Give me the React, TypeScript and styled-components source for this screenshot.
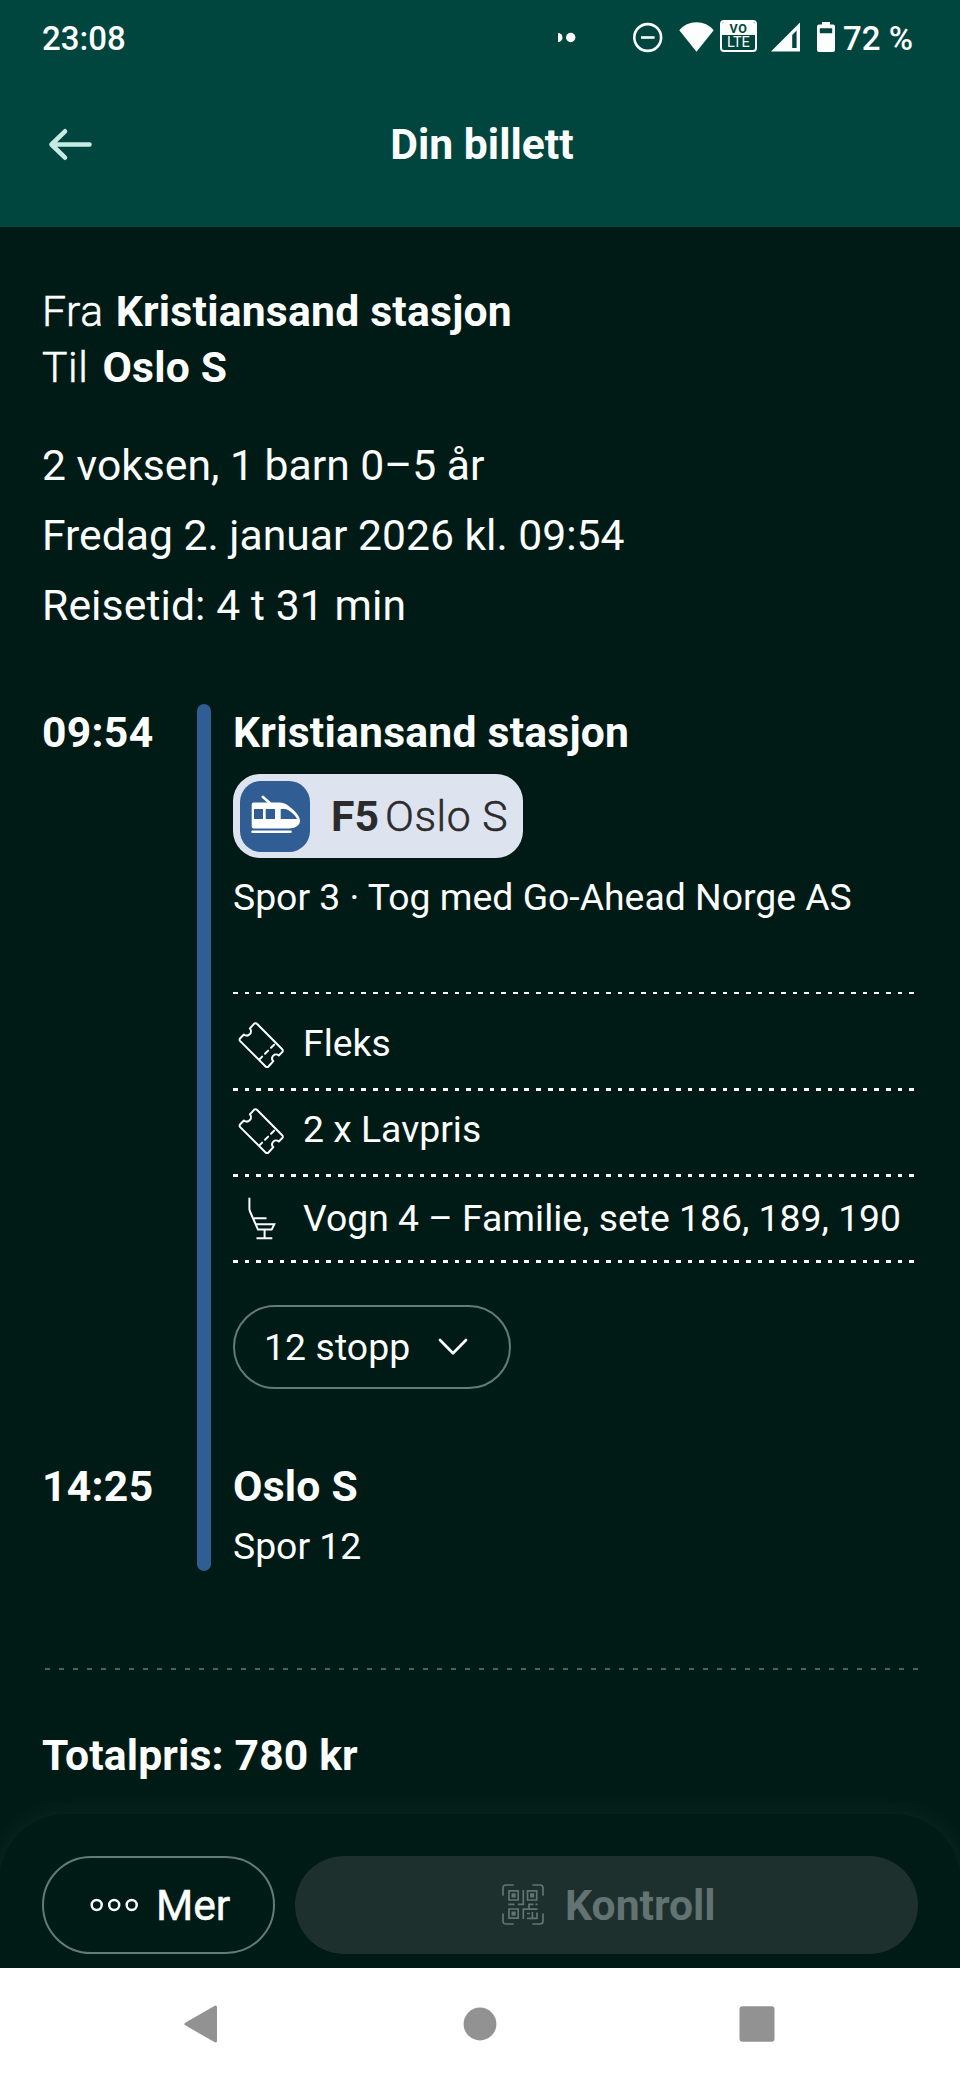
import React from 'react';
import styled, { createGlobalStyle, css } from 'styled-components';

const color = {
  header: '#00463e',
  page: '#001a16',
  text: '#fcfefe',
  arrow: '#c6ebe3',
  line: '#2f5d94',
  badge: '#dde4ef',
  badgeText: '#2b2b2c',
  outline: '#647a76',
  disabled: '#1d302e',
  disabledText: '#637371',
  nav: '#929292',
};

const GlobalStyle = createGlobalStyle`
  * { box-sizing: border-box; }
  body {
    margin: 0;
    background: ${color.page};
    font-family: Roboto, "Liberation Sans", sans-serif;
    color: ${color.text};
  }
  svg { display: block; flex: none; }
  button { font: inherit; color: inherit; padding: 0; margin: 0; background: none; border: 0; }
  h1, h2, p, ul { margin: 0; padding: 0; list-style: none; }
`;

const Screen = styled.div`
  width: 960px;
  height: 2080px;
  display: flex;
  flex-direction: column;
  background: ${color.page};
  overflow: hidden;
`;

/* Header */

const Header = styled.header`
  height: 227px;
  flex: none;
  background: ${color.header};
`;

const StatusBar = styled.div`
  height: 77px;
  padding: 0 47px 0 42px;
  display: flex;
  align-items: center;
  font-size: 33px;
  font-weight: 500;
  line-height: 40px;
`;

const StatusIcons = styled.div`
  margin-left: auto;
  display: flex;
  align-items: center;
  svg { margin-top: -4px; }
`;

const StatusItem = styled.span<{ $before: number }>`
  margin-left: ${(p) => p.$before}px;
`;

const VolteBadge = styled.div`
  width: 37px;
  height: 32px;
  margin-top: -5px;
  border: 2px solid ${color.text};
  border-radius: 4px;
  display: grid;
  grid-template-rows: 13px 15px;
  overflow: hidden;
  text-align: center;
`;

const VolteTop = styled.span`
  background: ${color.text};
  color: ${color.header};
  font-size: 12.5px;
  font-weight: 700;
  letter-spacing: 0.6px;
  line-height: 13px;
`;

const VolteBottom = styled.span`
  font-size: 14.5px;
  font-weight: 400;
  line-height: 16px;
`;

const TitleBar = styled.div`
  height: 133px;
  padding: 0 40px 0 42px;
  display: grid;
  grid-template-columns: 60px 1fr 58px;
  align-items: center;
`;

const BackButton = styled.button`
  padding-left: 5px;
`;

const Title = styled.h1`
  font-size: 42.67px;
  font-weight: 700;
  line-height: 56px;
  text-align: center;
`;

/* Summary */

const Main = styled.main`
  flex: 1;
  min-height: 0;
  padding: 56px 42px 0;
`;

const RouteLine = styled.p<{ $gap: number }>`
  display: flex;
  gap: ${(p) => p.$gap}px;
  font-size: 42.67px;
  line-height: 56px;
`;

const lightText = css`
  font-weight: 300;
  letter-spacing: 0.6px;
  -webkit-text-stroke: 0.55px currentColor;
`;

const RouteLabel = styled.span`
  ${lightText}
`;

const heading = css`
  font-size: 42.67px;
  font-weight: 700;
  line-height: 57px;
`;

const RouteStation = styled.span`
  font-weight: 700;
  letter-spacing: 0.22px;
`;

const Facts = styled.div`
  margin: 35px 0 64px;
  font-size: 42.67px;
  line-height: 70px;
`;

const Duration = styled.p`
  letter-spacing: 0.1px;
`;

/* Timeline */

const Journey = styled.section`
  display: grid;
  grid-template-columns: 155px 14px 1fr;
`;

const Time = styled.time`
  ${heading}
  letter-spacing: 0.3px;
`;

const TimelineBar = styled.div`
  grid-column: 2;
  grid-row: 1 / 3;
  border-radius: 7px;
  background: ${color.line};
`;

const Stop = styled.div<{ $last?: boolean }>`
  grid-column: 3;
  padding: 0 0 ${(p) => (p.$last ? 0 : 69)}px 22px;
`;

const StationName = styled.h2`
  ${heading}
  letter-spacing: 0.22px;
`;

const Detail = styled.p<{ $gap: number }>`
  margin-top: ${(p) => p.$gap}px;
  font-size: 37.33px;
  line-height: 50px;
  white-space: nowrap;
`;

const LineBadge = styled.div`
  width: 290px;
  height: 84px;
  margin-top: 13px;
  padding-left: 7px;
  display: flex;
  align-items: center;
  border-radius: 27px;
  background: ${color.badge};
  color: ${color.badgeText};
  font-size: 42.67px;
  line-height: 56px;
`;

const ModeIcon = styled.div`
  width: 70px;
  height: 71px;
  margin-right: 21px;
  border-radius: 21px;
  background: ${color.line};
`;

const LineCode = styled.span`
  font-weight: 700;
  margin-right: 6px;
`;

const LineTarget = styled.span`
  ${lightText}
`;

const dashes = (tone: string, dash: number, period: number) =>
  `repeating-linear-gradient(90deg, ${tone} 0 ${dash}px, transparent ${dash}px ${period}px)`;

const TicketList = styled.ul`
  margin-top: 70px;
  &::before {
    content: '';
    display: block;
    height: 2px;
    background: ${dashes(color.text, 4.7, 11.66)};
  }
`;

const TicketRow = styled.li<{ $height: number; $top: number }>`
  height: ${(p) => p.$height}px;
  padding-top: ${(p) => p.$top}px;
  display: flex;
  gap: 14px;
  font-size: 37.33px;
  line-height: 50px;
  white-space: nowrap;
  background: ${dashes(color.text, 4.7, 11.66)} bottom / 100% 3px no-repeat;
`;

const pill = css`
  display: flex;
  align-items: center;
  border-radius: 50px;
`;

const StopsButton = styled.button`
  ${pill}
  width: 278px;
  height: 84px;
  margin-top: 42px;
  padding-left: 29px;
  gap: 28px;
  border: 2px solid ${color.outline};
  font-size: 37.33px;
  line-height: 50px;
  letter-spacing: 0.1px;
`;

const Divider = styled.div`
  height: 2px;
  margin: 97px 0 57px 3px;
  background: ${dashes('#4c605c', 5, 14)};
`;

const Total = styled.p`
  ${heading}
  letter-spacing: 0.15px;
`;

/* Footer */

const ActionBar = styled.footer`
  flex: none;
  height: 154px;
  padding: 42px 42px 0;
  display: flex;
  gap: 20px;
  border-radius: 66px 66px 0 0;
  background: ${color.page};
  box-shadow: 0 0 27px rgba(200, 255, 240, 0.07);
`;

const MoreButton = styled.button`
  ${pill}
  width: 233px;
  height: 98px;
  padding-left: 45px;
  gap: 17px;
  border: 2px solid ${color.outline};
  font-size: 42.67px;
  font-weight: 400;
  -webkit-text-stroke: 0.5px currentColor;
`;

const ControlButton = styled.button`
  ${pill}
  flex: 1;
  height: 98px;
  padding-left: 207px;
  gap: 21px;
  background: ${color.disabled};
  color: ${color.disabledText};
  font-size: 42.67px;
  font-weight: 700;
`;

const SystemNav = styled.nav`
  position: relative;
  flex: none;
  height: 112px;
  padding: 0 185px 0 183px;
  display: grid;
  grid-template-columns: 1fr 36px 1fr;
  align-items: center;
  background: #fff;
  svg:last-child { justify-self: end; }
`;

/* Icons */

const DotsIndicator = () => (
  <svg width="19" height="34" viewBox="0 0 19 34">
    <path d="M1 13a4.5 4.5 0 0 1 0 9z" fill={color.text} />
    <circle cx="13.7" cy="17.5" r="4.7" fill={color.text} />
  </svg>
);

const DoNotDisturb = () => (
  <svg width="30" height="34" viewBox="0 0 30 34" fill="none" stroke={color.text} strokeWidth="2.6">
    <circle cx="14.7" cy="17.5" r="13.4" />
    <path d="M8 17.5h13.6" />
  </svg>
);

const Wifi = () => (
  <svg width="35" height="34" viewBox="0 0 35 34" fill={color.text}>
    <path d="M17.5 31.7 0.3 10.3C4.6 5 10.6 2.3 17.5 2.3S30.4 5 34.7 10.3z" />
  </svg>
);

const Signal = () => (
  <svg width="29" height="34" viewBox="0 0 29 34">
    <path fillRule="evenodd" d="M29 2.500v29H0zM21.2 14.900v13.200h4.400V10.500z" fill={color.text} />
  </svg>
);

const Battery = () => (
  <svg width="18" height="34" viewBox="0 0 18 34">
    <path
      fillRule="evenodd"
      d="M5 2h8v2.6h3a2 2 0 0 1 2 2v23.4a2 2 0 0 1-2 2H2a2 2 0 0 1-2-2V6.6a2 2 0 0 1 2-2h3zM2.8 8.3v5h12.4v-5z"
      fill={color.text}
    />
  </svg>
);

const ArrowLeft = () => (
  <svg width="48" height="40" viewBox="0 0 48 40" fill="none" stroke={color.arrow} strokeWidth="4.6" strokeLinecap="round" strokeLinejoin="round">
    <path d="M42.5 20.5H5M18 7.3 4.5 20.5 18 33.7" />
  </svg>
);

const Train = () => (
  <svg width="70" height="71" viewBox="0 0 70 71">
    <path d="M22.7 15.8 29.5 21.8" stroke="#fff" strokeWidth="2.5" strokeLinecap="round" />
    <path
      fillRule="evenodd"
      fill="#fff"
      d="M13.7 21.5H39.5C43 21.5 46 22.8 49 25.2C53.5 28.8 60 34 60 39.8C60 44.5 55 47.5 49 47.5H13.7A2 2 0 0 1 11.7 45.5V23.5A2 2 0 0 1 13.7 21.5ZM14 28V38H23V28ZM25.7 28V38H35V28ZM40.7 28V38H57C56 35.5 53 32.5 48.5 29.3C47 28.3 45.5 28 44 28Z"
    />
    <path d="M12.5 50.8H50.5" stroke="#fff" strokeWidth="2.5" strokeLinecap="round" />
  </svg>
);

const Ticket = () => (
  <svg width="56" height="54" viewBox="-0.5 0 56 54" fill="none" stroke={color.text} strokeWidth="2" strokeLinecap="round" strokeLinejoin="round">
    <path d="M20.5 5.8a2 2 0 0 1 2.9 0L48.7 31.2a2 2 0 0 1 0 2.9L45.3 37.5c-1.5-1.4-4-1.5-5.5 0.1s-1.5 4 0 5.6L35 48.5a2 2 0 0 1-2.9 0L6.7 23.1a2 2 0 0 1 0-2.9L10.4 16.5c1.7 1.3 4.2 1.3 5.8-0.2s1.7-4.1 0.2-6z" />
    <path d="M40.7 26.6 26 41.3" strokeDasharray="4.5 4" />
  </svg>
);

const Seat = () => (
  <svg width="56" height="54" viewBox="0 0 56 54" fill="none" stroke={color.text} strokeWidth="2">
    <path d="M16.4 4.7V15.5Q16.4 17 17 18.5L25 36.6H38.7L41.3 31.3H22.8M21 25.2H33.5M31.6 36.6V45M23.5 45.3H39.3" />
  </svg>
);

const ChevronDown = () => (
  <svg width="30" height="20" viewBox="0 0 30 20" fill="none" stroke={color.text} strokeWidth="2.7" strokeLinecap="round" strokeLinejoin="round">
    <path d="M2 3 15 16.3 28 3" />
  </svg>
);

const MoreDots = () => (
  <svg width="50" height="14" viewBox="0 0 50 14" fill="none" stroke={color.text} strokeWidth="2.5">
    <circle cx="7.7" cy="7" r="5" />
    <circle cx="25.2" cy="7" r="5" />
    <circle cx="42.7" cy="7" r="5" />
  </svg>
);

const QrCode = () => (
  <svg width="42" height="42" viewBox="0 0 42 42" fill="none" stroke={color.disabledText} strokeWidth="1.7">
    <path d="M1 11V4Q1 1 4 1H11M31 1H38Q41 1 41 4V11M41 30V37Q41 40 38 40H31M11 40H4Q1 40 1 37V30" strokeLinecap="round" />
    <path d="M7 6.8H16.2V16H7ZM25.5 6.8H34.7V16H25.5ZM7 25H16.2V34.2H7Z" />
    <path d="M9.5 9.3h4.2v4.2H9.5zM28 9.3h4.2v4.2H28zM9.5 27.5h4.2v4.2H9.5z" fill={color.disabledText} stroke="none" />
    <path d="M21.3 6V20.3H15.7M6.3 20.3H12.5M21.3 35V25.2H35.5M27 25V20.3H31.5M33.5 20.3H35.5M30.4 28V34.3M25 34.3H35.5M35 28.5V35M25 29.5H28" />
  </svg>
);

const NavBack = () => (
  <svg width="36" height="40" viewBox="0 0 36 40">
    <path d="M3 20 32.5 3V37Z" fill={color.nav} stroke={color.nav} strokeWidth="3" strokeLinejoin="round" />
  </svg>
);

const NavHome = () => (
  <svg width="36" height="40" viewBox="0 0 36 40">
    <circle cx="19" cy="20" r="16.4" fill={color.nav} />
  </svg>
);

const NavRecent = () => (
  <svg width="36" height="40" viewBox="0 0 36 40">
    <rect x="0.5" y="2.2" width="35" height="35.5" rx="3" fill={color.nav} />
  </svg>
);

const tickets = [
  { icon: <Ticket />, label: 'Fleks', height: 97, top: 24 },
  { icon: <Ticket />, label: '2 x Lavpris', height: 86, top: 13 },
  { icon: <Seat />, label: 'Vogn 4 – Familie, sete 186, 189, 190', height: 86, top: 16 },
];

export default function App() {
  return (
    <Screen>
      <GlobalStyle />
      <Header>
        <StatusBar>
          <span>23:08</span>
          <StatusIcons>
            <DotsIndicator />
            <StatusItem $before={57}><DoNotDisturb /></StatusItem>
            <StatusItem $before={16}><Wifi /></StatusItem>
            <StatusItem $before={6}>
              <VolteBadge>
                <VolteTop>VO</VolteTop>
                <VolteBottom>LTE</VolteBottom>
              </VolteBadge>
            </StatusItem>
            <StatusItem $before={14}><Signal /></StatusItem>
            <StatusItem $before={17}><Battery /></StatusItem>
            <StatusItem $before={8}>72 %</StatusItem>
          </StatusIcons>
        </StatusBar>
        <TitleBar>
          <BackButton aria-label="Tilbake"><ArrowLeft /></BackButton>
          <Title>Din billett</Title>
        </TitleBar>
      </Header>

      <Main>
        <RouteLine $gap={12}>
          <RouteLabel>Fra</RouteLabel>
          <RouteStation>Kristiansand stasjon</RouteStation>
        </RouteLine>
        <RouteLine $gap={14}>
          <RouteLabel>Til</RouteLabel>
          <RouteStation>Oslo S</RouteStation>
        </RouteLine>
        <Facts>
          <p>2 voksen, 1 barn 0–5 år</p>
          <p>Fredag 2. januar 2026 kl. 09:54</p>
          <Duration>Reisetid: 4 t 31 min</Duration>
        </Facts>

        <Journey>
          <Time>09:54</Time>
          <TimelineBar />
          <Stop>
            <StationName>Kristiansand stasjon</StationName>
            <LineBadge>
              <ModeIcon><Train /></ModeIcon>
              <LineCode>F5</LineCode>
              <LineTarget>Oslo S</LineTarget>
            </LineBadge>
            <Detail $gap={14}>Spor 3 · Tog med Go-Ahead Norge AS</Detail>
            <TicketList>
              {tickets.map((t) => (
                <TicketRow key={t.label} $height={t.height} $top={t.top}>
                  {t.icon}
                  <span>{t.label}</span>
                </TicketRow>
              ))}
            </TicketList>
            <StopsButton>
              <span>12 stopp</span>
              <ChevronDown />
            </StopsButton>
          </Stop>
          <Time>14:25</Time>
          <Stop $last>
            <StationName>Oslo S</StationName>
            <Detail $gap={6}>Spor 12</Detail>
          </Stop>
        </Journey>

        <Divider />
        <Total>Totalpris: 780 kr</Total>
      </Main>

      <ActionBar>
        <MoreButton>
          <MoreDots />
          <span>Mer</span>
        </MoreButton>
        <ControlButton disabled>
          <QrCode />
          <span>Kontroll</span>
        </ControlButton>
      </ActionBar>
      <SystemNav>
        <NavBack />
        <NavHome />
        <NavRecent />
      </SystemNav>
    </Screen>
  );
}
